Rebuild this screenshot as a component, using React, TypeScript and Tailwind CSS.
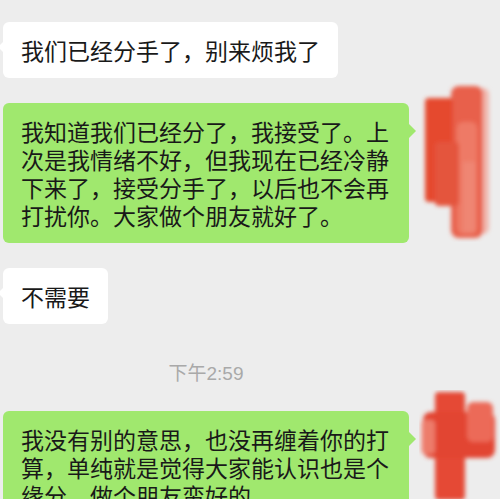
import React from "react";

const cjk = "font-['Noto_Sans_CJK_SC',_'Noto_Sans',_sans-serif]";

function Incoming({ text }: { text: string }) {
  return (
    <div className="pl-[3px]">
      <div className="relative inline-block rounded-[6px] bg-white px-[18px] py-[14px] text-[23px] leading-[28px] text-[#191919]">
        <span className="absolute left-[-5px] top-[19px] h-0 w-0 border-y-[6px] border-r-[6px] border-y-transparent border-r-white" />
        {text}
      </div>
    </div>
  );
}

function Outgoing({ text, avatar }: { text: string; avatar: React.ReactNode }) {
  return (
    <div className="flex items-start pl-[3px]">
      <div className="relative w-[406px] shrink-0 rounded-[6px] bg-[#a0e86e] px-[18px] py-[14px] text-[23px] leading-[28px] text-[#191919]">
        <span className="absolute right-[-7px] top-[21px] h-0 w-0 border-y-[7px] border-l-[7px] border-y-transparent border-l-[#a0e86e]" />
        {text}
      </div>
      {avatar}
    </div>
  );
}

function SmearOne() {
  return (
    <svg width="80" height="160" viewBox="0 0 80 160" className="ml-[10px] mt-[-21px] shrink-0">
      <defs>
        <filter id="b1" x="-30%" y="-30%" width="160%" height="160%">
          <feGaussianBlur stdDeviation="2.2" />
        </filter>
      </defs>
      <g filter="url(#b1)">
        <rect x="56" y="6" width="14" height="146" rx="6" fill="#f0b7ad" />
        <rect x="32" y="4" width="32" height="152" rx="8" fill="#e8604c" />
        <rect x="6" y="16" width="28" height="104" rx="4" fill="#e5482f" />
        <rect x="38" y="40" width="20" height="112" rx="6" fill="#ee7a66" />
        <rect x="16" y="60" width="24" height="64" rx="4" fill="#e4543c" />
        <rect x="44" y="80" width="12" height="70" fill="#f08d7c" opacity="0.6" />
      </g>
    </svg>
  );
}

function SmearTwo() {
  return (
    <svg width="80" height="110" viewBox="0 0 80 110" className="ml-[10px] mt-[-21px] shrink-0">
      <defs>
        <filter id="b2" x="-30%" y="-30%" width="160%" height="160%">
          <feGaussianBlur stdDeviation="2.2" />
        </filter>
      </defs>
      <g filter="url(#b2)">
        <rect x="16" y="2" width="30" height="108" rx="4" fill="#e54a34" />
        <rect x="4" y="22" width="72" height="46" rx="8" fill="#e24530" />
        <rect x="48" y="12" width="26" height="40" rx="6" fill="#ec6b58" />
        <rect x="2" y="30" width="14" height="34" rx="4" fill="#f08a7a" opacity="0.8" />
      </g>
    </svg>
  );
}

export default function App() {
  return (
    <div className={`h-[499px] w-[500px] overflow-hidden bg-[#ededed] pt-[22px] ${cjk}`}>
      <div className="flex flex-col gap-[25px]">
        <Incoming text="我们已经分手了，别来烦我了" />
        <Outgoing
          text="我知道我们已经分了，我接受了。上次是我情绪不好，但我现在已经冷静下来了，接受分手了，以后也不会再打扰你。大家做个朋友就好了。"
          avatar={<SmearOne />}
        />
        <Incoming text="不需要" />
      </div>
      <div className="mt-[36px] mb-[25px] w-[412px] text-center text-[19px] leading-[24px] text-[#a9a9a9]">
        下午<span className="font-['Liberation_Sans',_sans-serif]">2:59</span>
      </div>
      <Outgoing
        text="我没有别的意思，也没再缠着你的打算，单纯就是觉得大家能认识也是个缘分，做个朋友蛮好的。"
        avatar={<SmearTwo />}
      />
    </div>
  );
}
